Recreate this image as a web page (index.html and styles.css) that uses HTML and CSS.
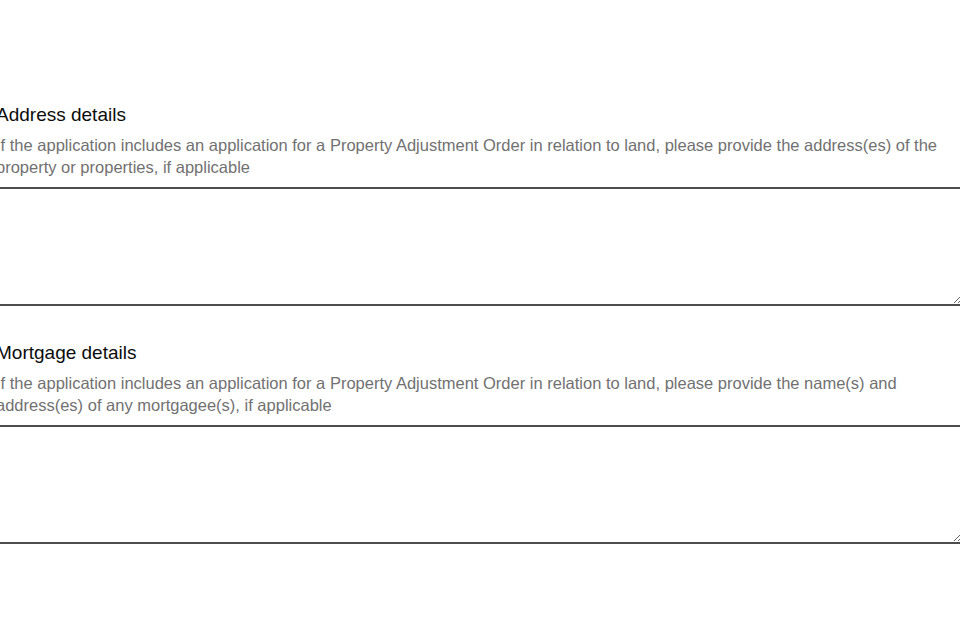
FILE: index.html
```html
<!DOCTYPE html>
<html lang="en">
<head>
<meta charset="utf-8">
<title>Property details</title>
<link rel="stylesheet" href="styles.css">
</head>
<body>
<main class="form">
  <div class="group">
    <label class="label" for="address">Address details</label>
    <p class="hint">If the application includes an application for a Property Adjustment Order in relation to land, please provide the address(es) of the property or properties, if applicable</p>
    <textarea class="textarea" id="address"></textarea>
  </div>
  <div class="group">
    <label class="label" for="mortgage">Mortgage details</label>
    <p class="hint">If the application includes an application for a Property Adjustment Order in relation to land, please provide the name(s) and address(es) of any mortgagee(s), if applicable</p>
    <textarea class="textarea" id="mortgage"></textarea>
  </div>
</main>
</body>
</html>
```
FILE: styles.css
```css
html, body {
  margin: 0;
  padding: 0;
  background: #ffffff;
  overflow: hidden;
}
body {
  font-family: "Liberation Sans", Arial, sans-serif;
  color: #0b0c0c;
}
.form {
  margin-left: -4px;
  width: 968px;
  padding-top: 104px;
  display: flex;
  flex-direction: column;
  gap: 36px;
}
.group {
  display: flex;
  flex-direction: column;
}
.label {
  display: block;
  font-size: 19px;
  line-height: 22px;
  margin-bottom: 8px;
}
.hint {
  margin: 0 0 9px;
  max-width: 960px;
  font-size: 16.5px;
  line-height: 22px;
  color: #717171;
}
.textarea {
  display: block;
  box-sizing: border-box;
  width: 968px;
  height: 119px;
  border: 2px solid #4d4d4d;
  border-radius: 0;
  margin: 0;
  padding: 5px;
  font-family: inherit;
  font-size: 16px;
  background: #fff;
}
```
